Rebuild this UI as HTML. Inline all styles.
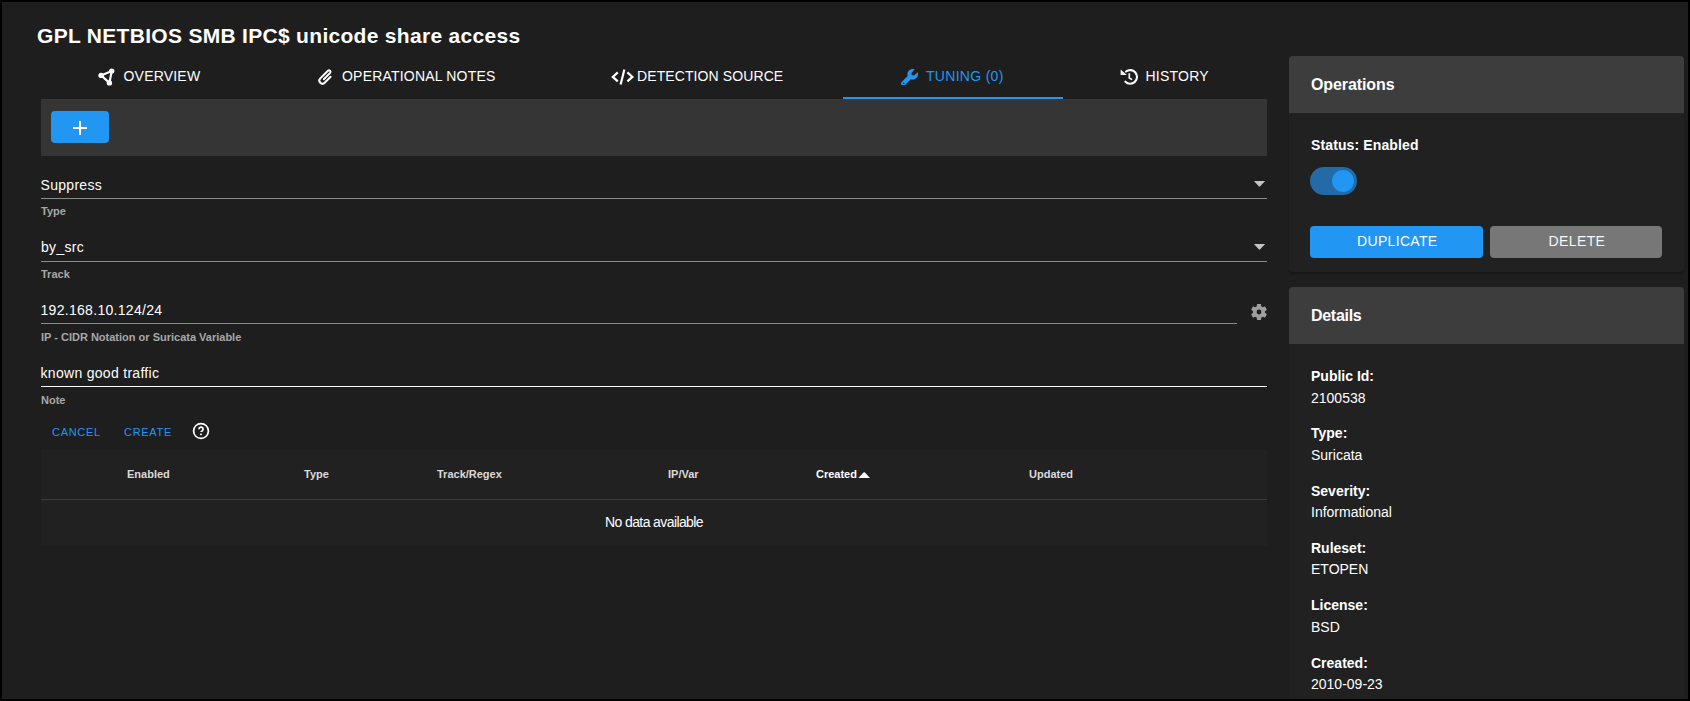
<!DOCTYPE html>
<html><head><meta charset="utf-8">
<style>
html,body{margin:0;padding:0;}
body{width:1690px;height:701px;background:#000;position:relative;overflow:hidden;font-family:"Liberation Sans",sans-serif;color:#fff;}
#page{position:absolute;left:2px;top:2px;width:1686px;height:697px;background:#1e1e1e;overflow:hidden;}
.t{position:absolute;white-space:nowrap;line-height:1;}
.abs{position:absolute;}
</style></head>
<body>
<div id="page"></div>
<!-- title -->
<div class="t" style="left:37px;top:25px;font-size:21px;font-weight:bold;letter-spacing:0.3px;">GPL NETBIOS SMB IPC$ unicode share access</div>

<!-- tabs -->
<div class="t" style="left:123.5px;top:69px;font-size:14px;letter-spacing:0.2px;">OVERVIEW</div>
<div class="t" style="left:342px;top:69px;font-size:14px;letter-spacing:0.2px;">OPERATIONAL NOTES</div>
<div class="t" style="left:637px;top:69px;font-size:14px;letter-spacing:0.1px;">DETECTION SOURCE</div>
<div class="t" style="left:926px;top:69px;font-size:14px;letter-spacing:0.3px;color:#2196f3;">TUNING (0)</div>
<div class="t" style="left:1145.5px;top:69px;font-size:14px;letter-spacing:0.22px;">HISTORY</div>
<div class="abs" style="left:843px;top:97px;width:220px;height:2px;background:#2196f3;"></div>

<!-- toolbar -->
<div class="abs" style="left:41px;top:99px;width:1226px;height:57px;background:#353535;"></div>
<div class="abs" style="left:51px;top:111px;width:58px;height:32px;background:#2196f3;border-radius:4px;"></div>
<div class="abs" style="left:73px;top:127px;width:14px;height:2px;background:#fff;"></div>
<div class="abs" style="left:79px;top:121px;width:2px;height:14px;background:#fff;"></div>

<!-- fields -->
<div class="t" style="left:40.5px;top:178px;font-size:14px;letter-spacing:0.3px;">Suppress</div>
<div class="abs" style="left:41px;top:198px;width:1226px;height:1px;background:#8a8a8a;"></div>
<div class="t" style="left:41px;top:206px;font-size:11px;font-weight:bold;color:#a8a8a8;">Type</div>

<div class="t" style="left:41px;top:240px;font-size:14px;letter-spacing:0.3px;">by_src</div>
<div class="abs" style="left:41px;top:261px;width:1226px;height:1px;background:#8a8a8a;"></div>
<div class="t" style="left:41px;top:269px;font-size:11px;font-weight:bold;color:#a8a8a8;">Track</div>

<div class="t" style="left:40.5px;top:303px;font-size:14px;letter-spacing:0.3px;">192.168.10.124/24</div>
<div class="abs" style="left:41px;top:323px;width:1196px;height:1px;background:#8a8a8a;"></div>
<div class="t" style="left:41px;top:332px;font-size:11px;font-weight:bold;color:#a8a8a8;">IP - CIDR Notation or Suricata Variable</div>

<div class="t" style="left:40.5px;top:366px;font-size:14px;letter-spacing:0.3px;">known good traffic</div>
<div class="abs" style="left:41px;top:386px;width:1226px;height:1px;background:#fff;"></div>
<div class="t" style="left:41px;top:395px;font-size:11px;font-weight:bold;color:#a8a8a8;">Note</div>

<div class="t" style="left:52px;top:427px;font-size:11px;letter-spacing:0.7px;color:#2196f3;">CANCEL</div>
<div class="t" style="left:124px;top:427px;font-size:11px;letter-spacing:0.7px;color:#2196f3;">CREATE</div>

<!-- table -->
<div class="abs" style="left:41px;top:450px;width:1226px;height:96px;background:#212121;"></div>
<div class="abs" style="left:41px;top:499px;width:1226px;height:1px;background:#3a3a3a;"></div>
<div class="t" style="left:127px;top:469px;font-size:11px;font-weight:bold;color:#dadada;">Enabled</div>
<div class="t" style="left:304px;top:469px;font-size:11px;font-weight:bold;color:#dadada;">Type</div>
<div class="t" style="left:437px;top:469px;font-size:11px;font-weight:bold;color:#dadada;">Track/Regex</div>
<div class="t" style="left:668px;top:469px;font-size:11px;font-weight:bold;color:#dadada;">IP/Var</div>
<div class="t" style="left:816px;top:469px;font-size:11px;font-weight:bold;color:#fff;">Created</div>
<div class="t" style="left:1029px;top:469px;font-size:11px;font-weight:bold;color:#dadada;">Updated</div>
<div class="t" style="left:605px;top:515px;font-size:14px;letter-spacing:-0.6px;">No data available</div>

<!-- right: operations card -->
<div class="abs" style="left:1289px;top:56px;width:395px;height:216px;background:#212121;border-radius:4px;overflow:hidden;box-shadow:0 2px 2px rgba(0,0,0,.25);">
  <div class="abs" style="left:0;top:0;width:395px;height:57px;background:#3d3d3d;"></div>
</div>
<div class="t" style="left:1311px;top:77px;font-size:16px;font-weight:bold;letter-spacing:-0.1px;">Operations</div>
<div class="t" style="left:1311px;top:138px;font-size:14px;font-weight:bold;letter-spacing:0.12px;">Status: Enabled</div>
<div class="abs" style="left:1310px;top:167px;width:47px;height:28px;border-radius:14px;background:#236aa6;"></div>
<div class="abs" style="left:1332px;top:170px;width:22px;height:22px;border-radius:11px;background:#2196f3;"></div>
<div class="abs" style="left:1310px;top:226px;width:173px;height:32px;background:#2196f3;border-radius:4px;"></div>
<div class="t" style="left:1357px;top:234px;font-size:14px;letter-spacing:0.33px;">DUPLICATE</div>
<div class="abs" style="left:1490px;top:226px;width:172px;height:32px;background:#777;border-radius:4px;"></div>
<div class="t" style="left:1548.5px;top:234px;font-size:14px;letter-spacing:0.4px;color:#f8f8f8;">DELETE</div>

<!-- details card -->
<div class="abs" style="left:1289px;top:287px;width:395px;height:430px;background:#212121;border-radius:4px;overflow:hidden;">
  <div class="abs" style="left:0;top:0;width:395px;height:57px;background:#3d3d3d;"></div>
</div>
<div class="t" style="left:1311px;top:308px;font-size:16px;font-weight:bold;letter-spacing:-0.3px;">Details</div>
<div class="t" style="left:1311px;top:369px;font-size:14px;font-weight:bold;">Public Id:</div>
<div class="t" style="left:1311px;top:391px;font-size:14px;">2100538</div>


<!-- tab icons -->
<svg class="abs" style="left:90px;top:60px;" width="30" height="30" viewBox="90 60 30 30">
  <g stroke="#fff" stroke-width="2.2" fill="none"><path d="M101.1 75.4 L111.7 71.1 L109.4 82.9 Z"/></g>
  <g fill="#fff"><circle cx="101.1" cy="75.4" r="2.7"/><circle cx="111.7" cy="71.1" r="2.7"/><circle cx="109.4" cy="82.9" r="2.7"/></g>
</svg>
<svg class="abs" style="left:314px;top:66px;" width="22" height="22" viewBox="0 0 22 22">
  <path d="M16.61 10.82 L10.68 16.76 A3.1 3.1 0 0 1 6.29 12.37 L13.93 4.74 A1.55 1.55 0 0 1 16.12 6.93 L9.83 13.22" stroke="#fff" stroke-width="2" fill="none" stroke-linecap="round"/>
</svg>
<svg class="abs" style="left:600px;top:60px;" width="40" height="32" viewBox="0 0 40 32">
  <g stroke="#fff" stroke-width="2.2" fill="none" stroke-linecap="butt" stroke-linejoin="miter">
    <path d="M17.8 12.4 L12.8 16.9 L17.8 21.4"/><path d="M24.4 9.4 L20.6 24.4"/><path d="M27.4 12.4 L32.4 16.9 L27.4 21.4"/>
  </g>
</svg>
<svg class="abs" style="left:901px;top:68.6px;" width="17" height="16.8" viewBox="0 0 512 512" preserveAspectRatio="none">
  <path fill="#2196f3" d="M352 320c88.4 0 160-71.600 160-160c0-15.300-2.200-30.100-6.200-44.200c-3.100-10.800-16.400-13.200-24.300-5.300l-76.800 76.800c-3 3-7.100 4.700-11.300 4.700H336c-8.800 0-16-7.200-16-16V118.600c0-4.200 1.700-8.300 4.700-11.300l76.800-76.800c7.900-7.900 5.400-21.200-5.300-24.300C382.100 2.200 367.300 0 352 0C263.600 0 192 71.600 192 160c0 19.100 3.400 37.500 9.500 54.500L19.900 396.100C7.200 408.800 0 426.100 0 444.100C0 481.600 30.400 512 67.900 512c18 0 35.300-7.200 48-19.900L297.500 310.500c17 6.200 35.400 9.500 54.500 9.500zM80 408a24 24 0 1 1 0 48 24 24 0 1 1 0-48z"/>
</svg>
<svg class="abs" style="left:1110px;top:60px;" width="32" height="32" viewBox="0 0 32 32">
  <path d="M16.0 11.54 A6.8 6.8 0 1 1 15.4 21.7" stroke="#fff" stroke-width="2.1" fill="none" stroke-linecap="round"/>
  <path d="M10.6 9.6 L10.6 15 L16.8 15 Z" fill="#fff"/>
  <path d="M19.3 13.2 V18 L22.1 19.6" stroke="#fff" stroke-width="1.6" fill="none"/>
</svg>
<!-- dropdown arrows -->
<svg class="abs" style="left:1253px;top:180px;" width="13" height="8" viewBox="0 0 13 8"><path d="M0.9 0.9 L12.1 0.9 L7.2 6.3 Q6.5 7 5.8 6.3 Z" fill="#c4c4c4"/></svg>
<svg class="abs" style="left:1253px;top:243px;" width="13" height="8" viewBox="0 0 13 8"><path d="M0.9 0.9 L12.1 0.9 L7.2 6.3 Q6.5 7 5.8 6.3 Z" fill="#c4c4c4"/></svg>
<!-- gear -->
<svg class="abs" style="left:1251.2px;top:304px;" width="16" height="16" viewBox="2 2 20 20">
<path fill="#9e9e9e" d="M12,15A3,3 0 0,1 9,12A3,3 0 0,1 12,9A3,3 0 0,1 15,12A3,3 0 0,1 12,15M19.43,12.97C19.47,12.65 19.5,12.33 19.5,12C19.5,11.67 19.47,11.34 19.43,11L21.54,9.37C21.730,9.22 21.78,8.95 21.66,8.73L19.66,5.27C19.54,5.05 19.27,4.96 19.05,5.05L16.56,6.05C16.04,5.66 15.5,5.32 14.87,5.07L14.5,2.42C14.46,2.18 14.25,2 14,2H10C9.75,2 9.54,2.18 9.5,2.42L9.13,5.07C8.5,5.32 7.96,5.66 7.44,6.05L4.95,5.05C4.73,4.96 4.46,5.05 4.34,5.27L2.34,8.73C2.21,8.95 2.27,9.22 2.46,9.37L4.57,11C4.53,11.34 4.5,11.67 4.5,12C4.5,12.33 4.53,12.65 4.57,12.97L2.46,14.63C2.27,14.78 2.21,15.05 2.34,15.27L4.34,18.73C4.46,18.95 4.73,19.03 4.95,18.95L7.44,17.94C7.96,18.34 8.5,18.68 9.13,18.93L9.5,21.58C9.54,21.82 9.75,22 10,22H14C14.25,22 14.46,21.82 14.5,21.58L14.87,18.93C15.5,18.67 16.04,18.34 16.56,17.94L19.05,18.95C19.27,19.03 19.54,18.95 19.66,18.73L21.66,15.27C21.78,15.05 21.73,14.78 21.54,14.63L19.43,12.97Z"/>
</svg>
<!-- help icon -->
<svg class="abs" style="left:190px;top:420px;" width="22" height="22" viewBox="0 0 22 22">
  <circle cx="11" cy="11" r="7.4" stroke="#fff" stroke-width="1.7" fill="none"/>
  <path d="M9 9.2 A2.05 2.05 0 1 1 12.1 10.9 Q11 11.5 11 12.1" stroke="#fff" stroke-width="1.7" fill="none"/>
  <rect x="10.1" y="13.6" width="1.8" height="1.5" fill="#fff"/>
</svg>
<!-- sort arrow -->
<svg class="abs" style="left:858px;top:471px;" width="13" height="8" viewBox="0 0 13 8"><path d="M0.4 7.1 L12 7.1 L6.9 1.5 Q6.2 0.8 5.5 1.5 Z" fill="#fff"/></svg>

<div class="t" style="left:1311px;top:426px;font-size:14px;font-weight:bold;">Type:</div>
<div class="t" style="left:1311px;top:448px;font-size:14px;">Suricata</div>
<div class="t" style="left:1311px;top:484px;font-size:14px;font-weight:bold;">Severity:</div>
<div class="t" style="left:1311px;top:505px;font-size:14px;">Informational</div>
<div class="t" style="left:1311px;top:541px;font-size:14px;font-weight:bold;">Ruleset:</div>
<div class="t" style="left:1311px;top:562px;font-size:14px;">ETOPEN</div>
<div class="t" style="left:1311px;top:598px;font-size:14px;font-weight:bold;">License:</div>
<div class="t" style="left:1311px;top:620px;font-size:14px;">BSD</div>
<div class="t" style="left:1311px;top:656px;font-size:14px;font-weight:bold;">Created:</div>
<div class="t" style="left:1311px;top:677px;font-size:14px;">2010-09-23</div>
<div class="abs" style="left:0;top:0;width:1686px;height:697px;border:2px solid #000;z-index:99;"></div>
</body></html>
